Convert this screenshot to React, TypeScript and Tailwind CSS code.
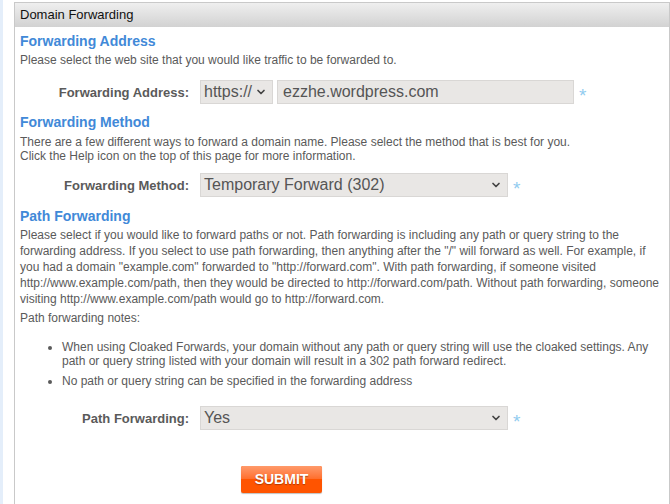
import React from 'react';
import { ChevronDown } from 'lucide-react';

const font = { fontFamily: '"Liberation Sans", Arial, sans-serif' };

const Star = () => (
  <span className="self-start ml-[5px] mt-[6px] text-[19px] leading-none text-[#92ccef]">*</span>
);

const FakeSelect: React.FC<{ value: string; width: string }> = ({ value, width }) => (
  <div
    className={`${width} h-[24px] flex items-center justify-between bg-[#e9e7e5] border border-[#d9d7d5] pl-[3px] pr-[5px] text-[16px] text-[#555]`}
  >
    <span>{value}</span>
    <ChevronDown size={12} strokeWidth={3.4} className="text-[#444]" />
  </div>
);

const Row: React.FC<{ label: string; children: React.ReactNode; className?: string }> = ({ label, children, className }) => (
  <div className={`flex items-center ${className ?? ''}`}>
    <div className="w-[169px] text-right font-bold text-[13px] text-[#5a5a5a] pt-[1px]">{label}</div>
    <div className="ml-[11px] flex items-center h-[24px]">{children}</div>
  </div>
);

const Heading: React.FC<{ children: React.ReactNode; className?: string }> = ({ children, className }) => (
  <h2 className={`text-[14px] leading-[18px] font-bold text-[#4189d8] ${className ?? ''}`}>{children}</h2>
);

export default function App() {
  return (
    <div className="w-[670px] h-[504px] flex bg-white overflow-hidden" style={font}>
      <div className="w-[3px] bg-[#e4eefa]" />
      <div className="w-[11px]" />
      <div className="flex-1 mt-[2px] border-l border-t border-r border-[#c9c9c9] flex flex-col">
        <div className="h-[24px] flex items-center px-[5px] bg-gradient-to-b from-[#efefef] to-[#d2d2d2] text-[13px] text-[#111]">
          Domain Forwarding
        </div>

        <div className="px-[5px] text-[12px] text-[#5a5a5a]">
          <Heading className="mt-[5px]">Forwarding Address</Heading>
          <p className="mt-[3px] leading-[14px]">Please select the web site that you would like traffic to be forwarded to.</p>

          <Row label="Forwarding Address:" className="mt-[13px]">
            <FakeSelect value="https://" width="w-[73px]" />
            <div className="ml-[4px] w-[297px] h-[24px] flex items-center bg-[#e9e7e5] border border-[#d9d7d5] px-[5px] text-[16px] text-[#555]">
              ezzhe.wordpress.com
            </div>
            <Star />
          </Row>

          <Heading className="mt-[9px]">Forwarding Method</Heading>
          <p className="mt-[4px] leading-[14px] whitespace-nowrap">
            There are a few different ways to forward a domain name. Please select the method that is best for you.
            <br />
            Click the Help icon on the top of this page for more information.
          </p>

          <Row label="Forwarding Method:" className="mt-[10px]">
            <FakeSelect value="Temporary Forward (302)" width="w-[308px]" />
            <Star />
          </Row>

          <Heading className="mt-[10px]">Path Forwarding</Heading>
          <p className="mt-[2px] leading-[16px] whitespace-nowrap">
            Please select if you would like to forward paths or not. Path forwarding is including any path or query string to the
            <br />
            forwarding address. If you select to use path forwarding, then anything after the "/" will forward as well. For example, if
            <br />
            you had a domain "example.com" forwarded to "http://forward.com". With path forwarding, if someone visited
            <br />
            http://www.example.com/path, then they would be directed to http://forward.com/path. Without path forwarding, someone
            <br />
            visiting http://www.example.com/path would go to http://forward.com.
          </p>

          <p className="mt-[4px] leading-[14px]">Path forwarding notes:</p>
          <ul className="mt-[15px] ml-[42px] list-disc leading-[14px] whitespace-nowrap">
            <li>
              When using Cloaked Forwards, your domain without any path or query string will use the cloaked settings. Any
              <br />
              path or query string listed with your domain will result in a 302 path forward redirect.
            </li>
            <li className="mt-[6px]">No path or query string can be specified in the forwarding address</li>
          </ul>

          <Row label="Path Forwarding:" className="mt-[18px]">
            <FakeSelect value="Yes" width="w-[308px]" />
            <Star />
          </Row>

          <div className="mt-[36px] ml-[221px]">
            <button className="relative w-[81px] h-[27px] rounded-[2px] overflow-hidden shadow-[0_1px_1px_rgba(0,0,0,0.25)] bg-[#ff5400]">
              <span className="absolute inset-x-0 top-0 h-[13px] bg-gradient-to-b from-[#ff9a6a] to-[#ff6e2a]" />
              <span className="relative text-white font-bold text-[14px] [text-shadow:0_1px_1px_rgba(120,40,0,0.6)]">SUBMIT</span>
            </button>
          </div>
        </div>
      </div>
    </div>
  );
}
